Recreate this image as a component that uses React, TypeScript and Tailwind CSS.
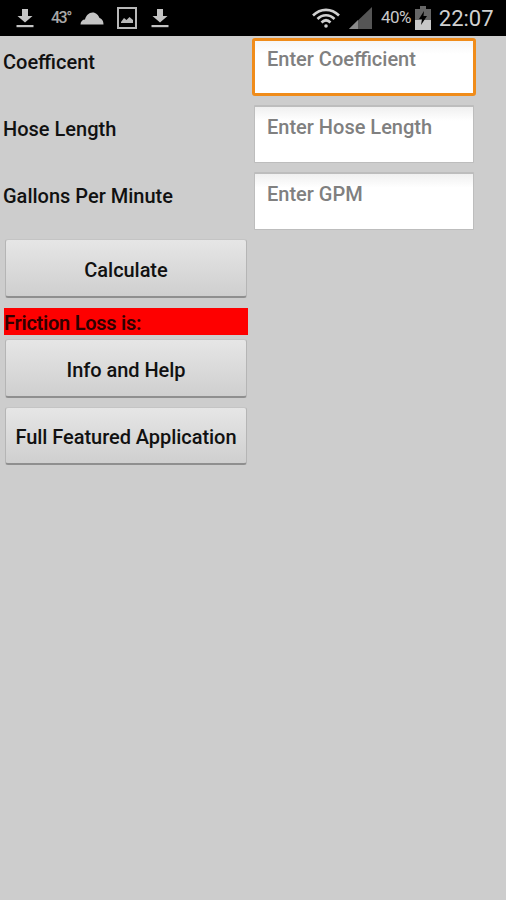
import React from "react";

const font = { fontFamily: "Roboto, sans-serif" };

function Download() {
  return (
    <svg width="18" height="20" viewBox="0 0 18 20" className="shrink-0">
      <path d="M6 1h6v7h4.5L9 14.5 1.5 8H6z" fill="#c4c4c4" />
      <rect x="0.5" y="17" width="17" height="2.2" fill="#c4c4c4" />
    </svg>
  );
}

function Field({ label, placeholder, focused }: { label: string; placeholder: string; focused?: boolean }) {
  return (
    <div className="flex h-[58px] items-start">
      <div className="w-[254px] shrink-0 pl-[3px] pt-[11px] text-[20px] leading-[26px] font-medium text-[#111111] whitespace-nowrap">
        {label}
      </div>
      <div
        className={
          focused
            ? "-ml-[2px] h-[58px] w-[224px] rounded-[3px] border-[3px] border-[#f08c1a] bg-gradient-to-b from-[#f6f6f6] to-white to-[25%] pl-[12px] pt-[5px] text-[20px] leading-[26px] font-medium text-[#808080]"
            : "h-[58px] w-[220px] rounded-[1px] border border-[#bdbdbd] border-t-[2px] bg-gradient-to-b from-[#f0f0f0] to-white to-[25%] pl-[12px] pt-[7px] text-[20px] leading-[26px] font-medium text-[#808080]"
        }
      >
        {placeholder}
      </div>
    </div>
  );
}

function Btn({ children, h }: { children: React.ReactNode; h: string }) {
  return (
    <div
      className={`ml-[5px] flex w-[242px] ${h} items-center justify-center rounded-[3px] border-b-[2px] border-b-[#8f8f8f] border-x border-x-[#b5b5b5] border-t border-t-[#c4c4c4] bg-gradient-to-b from-[#e6e6e6] to-[#cfcfcf] pt-[3px] text-[20px] font-medium tracking-[-0.05px] text-[#111111] whitespace-nowrap`}
    >
      {children}
    </div>
  );
}

export default function App() {
  return (
    <div style={font} className="flex h-[900px] w-[506px] flex-col overflow-hidden bg-[#cdcdcd]">
      <div className="flex h-[36px] shrink-0 items-center bg-black pl-[16px] pr-[12px] text-[#c4c4c4]">
        <Download />
        <span className="ml-[17px] w-[20px] text-[16px] font-medium tracking-[-1.5px] text-[#a8a8a8]">43°</span>
        <svg width="24" height="14" viewBox="0 0 24 14" className="ml-[9px]">
          <path d="M0.5 13.5c0-3 2-5 4.500-5 1-4 4-7 7.500-7 3.500 0 6 2.500 7 5.500 2 .5 4 2.500 4 6.500z" fill="#c4c4c4" />
        </svg>
        <svg width="20" height="22" viewBox="0 0 20 22" className="ml-[13px]">
          <rect x="1" y="1" width="18" height="20" fill="none" stroke="#b8b8b8" strokeWidth="2" />
          <path d="M4 15l3-4 2.500 2 3-3 3.500 3v3H4z" fill="#b8b8b8" />
        </svg>
        <div className="ml-[14px]"><Download /></div>
        <svg width="28" height="20" viewBox="0 0 28 20" className="ml-[143px]">
          <path d="M1 7.500C8.500 0 19.500 0 27 7.500" fill="none" stroke="#d0d0d0" strokeWidth="2.600" />
          <path d="M5.500 11c5-5 12-5 17 0" fill="none" stroke="#d0d0d0" strokeWidth="2.600" />
          <path d="M9.500 14.500c3-3 6-3 9 0" fill="none" stroke="#d0d0d0" strokeWidth="2.600" />
          <circle cx="14" cy="18" r="1.800" fill="#d0d0d0" />
        </svg>
        <svg width="24" height="24" viewBox="0 0 24 24" className="ml-[9px]">
          <path d="M0 23 23 1v22z" fill="#555" />
          <path d="M0 23 9 14v9z" fill="#8a8a8a" />
        </svg>
        <span className="ml-[8px] text-[17px] tracking-[-0.6px] text-[#c8c8c8] whitespace-nowrap">40%</span>
        <svg width="16" height="24" viewBox="0 0 16 24" className="ml-[4px] shrink-0">
          <rect x="5" y="0" width="6" height="3" fill="#666" />
          <rect x="0" y="3" width="16" height="21" fill="#666" />
          <rect x="0" y="14" width="16" height="10" fill="#c8c8c8" />
          <path d="M9 5 4 13h3l-1 6 6-9H8.500z" fill="#000" />
        </svg>
        <span className="ml-[8px] text-[22px] text-[#d0d0d0] whitespace-nowrap">22:07</span>
      </div>
      <div className="flex flex-col gap-[9px] pt-[2px]">
        <Field label="Coefficent" placeholder="Enter Coefficient" focused />
        <Field label="Hose Length" placeholder="Enter Hose Length" />
        <Field label="Gallons Per Minute" placeholder="Enter GPM" />
      </div>
      <div className="mt-[9px] flex flex-col">
        <Btn h="h-[59px]">Calculate</Btn>
        <div className="mt-[10px] ml-[4px] mb-[4px] h-[27px] w-[244px] bg-[#fe0000] text-[20px] leading-[30px] font-semibold tracking-[-0.25px] text-[#300000] whitespace-nowrap">
          Friction Loss is:
        </div>
        <Btn h="h-[59px]">Info and Help</Btn>
        <div className="h-[9px]" />
        <Btn h="h-[58px]">Full Featured Application</Btn>
      </div>
    </div>
  );
}
